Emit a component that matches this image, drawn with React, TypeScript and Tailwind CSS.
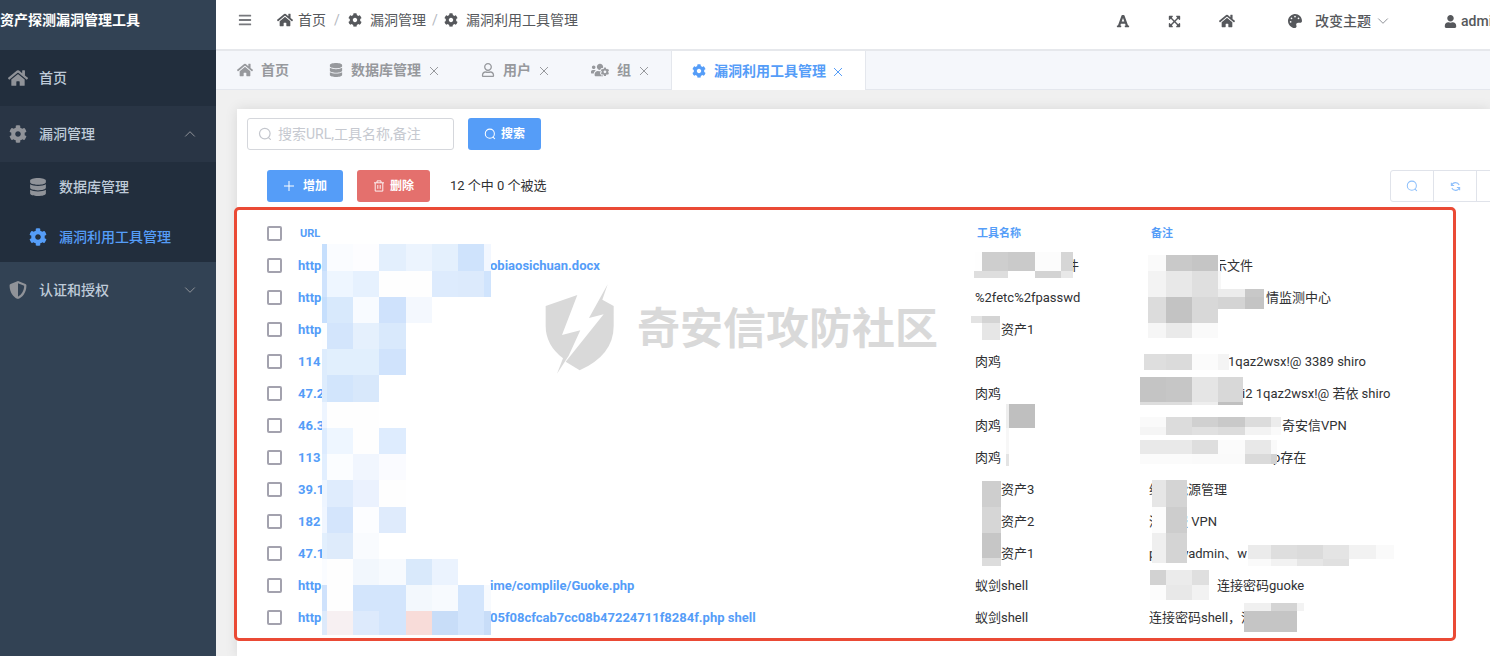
import React from 'react';
import {
  FaBars,
  FaCog,
  FaDatabase,
  FaExpandArrowsAlt,
  FaFont,
  FaHome,
  FaPalette,
  FaRegUser,
  FaShieldAlt,
  FaUser,
  FaUsersCog,
} from 'react-icons/fa';

type IconProps = { className?: string };

function Search({ className }: IconProps) {
  return (
    <svg viewBox="0 0 14 14" fill="none" stroke="currentColor" strokeWidth="1.2" strokeLinecap="round" className={className} aria-hidden="true">
      <circle cx="6.8" cy="6.6" r="5.3" />
      <path d="M10.4 10.6 12.4 12.4" />
    </svg>
  );
}

function Chevron({ className }: IconProps) {
  return (
    <svg viewBox="0 0 12 12" fill="none" stroke="currentColor" strokeWidth="1" strokeLinecap="round" className={className} aria-hidden="true">
      <path d="M1.5 3.8 6 8.3l4.500-4.500" />
    </svg>
  );
}

function Cross({ className }: IconProps) {
  return (
    <svg viewBox="0 0 14 14" fill="none" stroke="currentColor" strokeWidth="1" strokeLinecap="round" className={className} aria-hidden="true">
      <path d="M3.300 4.300l7.400 7.400M10.700 4.300l-7.400 7.400" />
    </svg>
  );
}

function Plus({ className }: IconProps) {
  return (
    <svg viewBox="0 0 12 12" fill="none" stroke="currentColor" strokeWidth="1" className={className} aria-hidden="true">
      <path d="M6 1v10M1 6h10" />
    </svg>
  );
}

function Trash({ className }: IconProps) {
  return (
    <svg viewBox="0 0 12 12" fill="none" stroke="currentColor" strokeWidth="0.9" className={className} aria-hidden="true">
      <path d="M1 2.800h10M4 2.800V.9h4v1.900M2.200 2.800v8.300h7.600V2.800M4.800 5v3.800M7.200 5v3.800" />
    </svg>
  );
}

function Refresh({ className }: IconProps) {
  return (
    <svg viewBox="0 0 12 12" fill="none" stroke="currentColor" strokeWidth="1.2" className={className} aria-hidden="true">
      <path d="M1.800 4.800A4.400 4.400 0 0 1 10 4.300M10.200 7.200A4.400 4.400 0 0 1 2 7.700" />
      <path d="M1.500 1.800v3.100h3M10.500 10.200V7.100h-3" />
    </svg>
  );
}

const rows = [
  { url: 'http', rest: 'obiaosichuan.docx', name: '件', namePad: 'pl-[91px]', note: '示文件', notePad: 'pl-[65px]' },
  { url: 'http', rest: '', name: '%2fetc%2fpasswd', namePad: '', note: '情监测中心', notePad: 'pl-[117px]' },
  { url: 'http', rest: '', name: '资产1', namePad: 'pl-[26px]', note: '', notePad: '' },
  { url: '114', rest: '', name: '肉鸡', namePad: '', note: '1qaz2wsx!@ 3389 shiro', notePad: 'pl-[79px]' },
  { url: '47.2', rest: '', name: '肉鸡', namePad: '', note: 'i2 1qaz2wsx!@ 若依 shiro', notePad: 'pl-[93px]' },
  { url: '46.3', rest: '', name: '肉鸡', namePad: '', note: '奇安信VPN', notePad: 'pl-[133px]' },
  { url: '113', rest: '', name: '肉鸡', namePad: '', note: 'p存在', notePad: 'pl-[124px]' },
  { url: '39.1', rest: '', name: '资产3', namePad: 'pl-[26px]', note: '综合能源管理', notePad: '' },
  { url: '182', rest: '', name: '资产2', namePad: 'pl-[26px]', note: '深信服 VPN', notePad: '' },
  { url: '47.1', rest: '', name: '资产1', namePad: 'pl-[26px]', note: 'phpmyadmin、w', notePad: '' },
  { url: 'http', rest: 'ime/complile/Guoke.php', name: '蚁剑shell', namePad: '', note: '连接密码guoke', notePad: 'pl-[68px]' },
  { url: 'http', rest: '05f08cfcab7cc08b47224711f8284f.php shell', name: '蚁剑shell', namePad: '', note: '连接密码shell，没', notePad: '' },
];

/* Redaction mosaic over the URL column: one colour per tile. */
const gridX = [322, 327, 353, 379, 406, 432, 458, 484, 491];
const gridY = [244, 271, 297, 323, 349, 375, 402, 428, 454, 480, 507, 533, 559, 585, 611, 635];
const grid = [
  '#c6dffd #fafcff #fdfdff #e3effd #ecf4fe #e4f0fd #cfe3fc #f2f7ff',
  '#cfe3fd #eef6ff #e6f1fe #fefefe #fefefe #ddebfd #dceafc #d0e4fd',
  '#c6dffd #d8e9fc #f8fbff #cfe2fc #f4f8fe - - -',
  '#fdfeff #d3e5fc #e5f0fd #d9e9fc - - - -',
  '#ddecfd #e1effd #e1effd #d0e3fc - - - -',
  '#ddecfd #d2e5fc #d8e8fb - - - - -',
  '#eef5ff #fefefe #fefefe - - - - -',
  '#ddecff #eef6ff #fefefe #deecfe - - - -',
  '#e2efff #fbfdff #f1f6fe #fafbff - - - -',
  '#eef5ff #dfecfd #ebf2fe #fefefe - - - -',
  '#f0f6ff #d4e5fc #fcfdff #dfebfc - - - -',
  '#e2effd #deebfb #f9fbfe - - - - -',
  '#fafcff #fefefe #f2f7fd #f7fafe #d9e9fb #ebf3fe - -',
  '#cfe2fc #fefefe #d3e5fc #d3e5fc #f3f8fd #f7fafe #d3e5fc #f7fafe',
  '#ddeafb #f7f0f2 #ddeafc #d3e5fc #f8dcd9 #c8ddf8 #d3e5fc #c8ddf8',
].map((line) => line.split(' '));

/* Grey redaction tiles: x, y, width, height, grey level. */
const tiles: number[][] = [
  [975, 252, 7, 19, 254], [982, 252, 26, 19, 206], [1008, 252, 27, 19, 202], [1035, 252, 26, 19, 252], [1061, 252, 12, 19, 214],
  [974, 271, 34, 7, 222], [1035, 271, 26, 7, 211], [1061, 271, 12, 7, 232],
  [971, 316, 11, 7, 227], [982, 316, 18, 7, 212], [982, 323, 18, 17, 230],
  [1006, 404, 3, 24, 238], [1009, 404, 26, 24, 191], [1006, 428, 3, 26, 247], [1006, 454, 3, 12, 228],
  [982, 481, 19, 26, 206], [982, 507, 19, 26, 214], [982, 533, 19, 25, 198], [982, 558, 19, 8, 220],
  [1148, 255, 18, 16, 250], [1166, 255, 26, 16, 201], [1192, 255, 26, 16, 197], [1218, 255, 2, 16, 253],
  [1148, 271, 18, 26, 243], [1166, 271, 26, 26, 232], [1192, 271, 26, 26, 223], [1218, 271, 3, 18, 247],
  [1148, 297, 18, 26, 220], [1166, 297, 26, 26, 195], [1192, 297, 26, 26, 216],
  [1148, 323, 18, 15, 246], [1166, 323, 26, 15, 234], [1192, 323, 26, 15, 250],
  [1218, 289, 27, 8, 236], [1245, 289, 19, 8, 200], [1218, 297, 27, 12, 212], [1245, 297, 19, 12, 196],
  [1144, 354, 22, 16, 222], [1166, 354, 26, 16, 219], [1192, 354, 26, 16, 251], [1218, 354, 11, 16, 244],
  [1140, 377, 26, 25, 196], [1166, 377, 26, 25, 198], [1192, 377, 26, 25, 229], [1218, 377, 25, 25, 216],
  [1140, 402, 52, 3, 221], [1192, 402, 26, 3, 238], [1218, 402, 25, 3, 192],
  [1140, 417, 26, 10, 250], [1166, 417, 26, 10, 220], [1192, 417, 26, 10, 208], [1218, 417, 27, 10, 201], [1245, 417, 26, 10, 220], [1271, 417, 10, 10, 236],
  [1140, 427, 26, 8, 245], [1166, 427, 26, 8, 220], [1192, 427, 26, 8, 224], [1218, 427, 27, 8, 220], [1245, 427, 26, 8, 243], [1271, 427, 10, 8, 250],
  [1140, 440, 52, 14, 233], [1192, 440, 26, 14, 222], [1218, 440, 27, 14, 251], [1245, 440, 26, 14, 232], [1271, 440, 6, 14, 250],
  [1140, 454, 52, 10, 251], [1192, 454, 53, 10, 250], [1245, 454, 26, 10, 218], [1271, 454, 6, 10, 210],
  [1152, 480, 14, 27, 230], [1166, 480, 21, 27, 212], [1152, 507, 14, 26, 252], [1166, 507, 21, 26, 205], [1152, 533, 14, 30, 239], [1166, 533, 21, 30, 212],
  [1248, 545, 23, 14, 235], [1271, 545, 26, 14, 222], [1297, 545, 26, 14, 219], [1323, 545, 26, 14, 228], [1349, 545, 27, 14, 242], [1376, 545, 18, 14, 250],
  [1248, 559, 23, 7, 250], [1271, 559, 26, 7, 242], [1297, 559, 26, 7, 230], [1323, 559, 26, 7, 224],
  [1150, 570, 16, 15, 210], [1166, 570, 26, 15, 235], [1192, 570, 17, 15, 223],
  [1150, 585, 16, 15, 252], [1166, 585, 26, 15, 232], [1192, 585, 17, 15, 242],
  [1244, 603, 27, 8, 240], [1271, 603, 26, 8, 212], [1297, 603, 7, 8, 243], [1244, 611, 53, 21, 197],
];

function Mosaic() {
  return (
    <svg viewBox="237 209 1219 432" className="pointer-events-none absolute top-0 left-0 h-[432px] w-[1219px]" shapeRendering="crispEdges" aria-hidden="true">
      {grid.map((line, r) =>
        line.map((fill, c) =>
          fill === '-' ? null : (
            <rect key={`${r}-${c}`} x={gridX[c]} y={gridY[r]} width={gridX[c + 1] - gridX[c]} height={gridY[r + 1] - gridY[r]} fill={fill} />
          ),
        ),
      )}
      {tiles.map(([x, y, w, h, g], i) => (
        <rect key={i} x={x} y={y} width={w} height={h} fill={`rgb(${g},${g},${g})`} />
      ))}
    </svg>
  );
}

function Watermark() {
  return (
    <div className="pointer-events-none absolute top-[74px] left-[306px] flex items-center gap-[21px] text-[#d9d9d9]">
      <svg viewBox="40 36 219 276" className="h-[92px] w-[73px]" fill="currentColor" aria-hidden="true">
        <path d="M48 105 143 72 97 192 152 178 117 254 82 308 100 262Q48 222 48 165Z" />
        <path d="M234 40 178 141 222 130 108 272 150 298Q252 252 252 165V105L218 86Z" />
      </svg>
      <span className="text-[43px] leading-[60px] font-bold">奇安信攻防社区</span>
    </div>
  );
}

const checkbox = 'block size-[15px] appearance-none rounded-[2px] border-2 border-[#a3a2ae] bg-white checked:bg-[#559df8]';

const tabs = [
  { label: '数据库管理', icon: FaDatabase, iconSize: 'size-3.5' },
  { label: '用户', icon: FaRegUser, iconSize: 'size-3.5' },
  { label: '组', icon: FaUsersCog, iconSize: 'size-[18px]' },
];

export default function App() {
  return (
    <div className="flex min-h-screen overflow-hidden bg-[#f0f0f0] font-['Roboto','Noto_Sans_CJK_SC',sans-serif] text-sm text-[#303133]">
      <aside className="w-[216px] shrink-0 bg-[#324254] text-[#bfcbd9]">
        <h1 className="flex h-[50px] items-start pt-2.5 font-bold whitespace-nowrap text-white">资产探测漏洞管理工具</h1>
        <nav className="font-medium">
          <a href="#home" className="flex h-14 items-center bg-[#222e3d]">
            <span className="flex w-[39px] pl-2"><FaHome className="size-5 text-[#909399]" /></span>首页
          </a>
          <button type="button" className="flex h-14 w-full items-center bg-[#293545] pr-5">
            <span className="flex w-[39px] pl-[9px]"><FaCog className="size-[18px] text-[#909399]" /></span>漏洞管理
            <Chevron className="ml-auto size-3 rotate-180 text-[#909399]" />
          </button>
          <a href="#database" className="flex h-[50px] items-center bg-[#222e3d]">
            <span className="flex w-[59px] pl-[29px]"><FaDatabase className="size-[18px] text-[#909399]" /></span>数据库管理
          </a>
          <a href="#tools" className="flex h-[50px] items-center bg-[#222e3d] text-[#559df8]">
            <span className="flex w-[59px] pl-[29px]"><FaCog className="size-[18px]" /></span>漏洞利用工具管理
          </a>
          <button type="button" className="flex h-14 w-full items-center pr-5">
            <span className="flex w-[39px] pl-[9px]"><FaShieldAlt className="size-[18px] text-[#909399]" /></span>认证和授权
            <Chevron className="ml-auto size-3 text-[#909399]" />
          </button>
        </nav>
      </aside>

      <main className="flex min-w-0 flex-1 flex-col overflow-hidden">
        <header className="flex h-[51px] items-start justify-between border-b-2 border-[#e6e8ec] bg-white pt-2.5 pl-[22px] text-[#56585c]">
          <div className="flex h-5 items-center">
            <button type="button" aria-label="折叠菜单" className="mr-[25px]"><FaBars className="size-3.5 text-[#77797d]" /></button>
            <nav className="flex items-center">
              <a href="#home" className="flex items-center gap-[5px]"><FaHome className="size-4" />首页</a>
              <span className="w-[22px] text-center text-[#b4b8c0]">/</span>
              <a href="#vuln" className="flex items-center gap-2"><FaCog className="size-3.5" />漏洞管理</a>
              <span className="w-[18px] text-center text-[#b4b8c0]">/</span>
              <a href="#tools" className="flex items-center gap-2"><FaCog className="size-3.5" />漏洞利用工具管理</a>
            </nav>
          </div>
          <div className="-mr-2.5 flex h-[22px] shrink-0 items-center font-medium">
            <button type="button" aria-label="字体大小" className="mr-[38px]"><FaFont className="size-3.5" /></button>
            <button type="button" aria-label="全屏" className="mr-[38px]"><FaExpandArrowsAlt className="size-[13px]" /></button>
            <a href="#home" aria-label="首页" className="mr-[53px]"><FaHome className="size-4" /></a>
            <button type="button" className="mr-[55px] flex items-center">
              <FaPalette className="mr-[13px] size-3.5" />改变主题
              <Chevron className="ml-1.5 size-3 text-[#909399]" />
            </button>
            <button type="button" className="flex items-center gap-1"><FaUser className="size-[13px]" />admin</button>
          </div>
        </header>

        <div className="flex h-[39px] shrink-0 border-b border-[#e4e7ed] bg-[#f5f7fb] pl-px font-bold text-[#97999d]">
          <a href="#home" className="flex items-center gap-2 px-5"><FaHome className="size-4" />首页</a>
          {tabs.map(({ label, icon: Icon, iconSize }) => (
            <div key={label} className="flex items-center px-5">
              <a href={`#${label}`} className="flex items-center gap-2"><Icon className={iconSize} />{label}</a>
              <button type="button" aria-label={`关闭${label}`} className="ml-1.5"><Cross className="size-3.5" /></button>
            </div>
          ))}
          <div className="-mb-px flex items-center border-x border-[#e4e7ed] bg-white px-5 text-[#559df8]">
            <a href="#tools" className="flex items-center gap-2"><FaCog className="size-3.5" />漏洞利用工具管理</a>
            <button type="button" aria-label="关闭漏洞利用工具管理" className="ml-[5px]"><Cross className="size-3.5" /></button>
          </div>
        </div>

        <section className="mt-[19px] ml-[21px] flex-1 bg-white pt-[9px] shadow-[0_0_12px_rgba(0,0,0,0.1)]">
          <form className="flex gap-3.5 pl-2.5" onSubmit={(e) => e.preventDefault()}>
            <label className="flex h-8 w-[207px] items-center gap-1.5 rounded-[3px] border border-[#d5d7dc] pl-2.5 text-[#c3c6cd]">
              <Search className="size-3.5 shrink-0" />
              <input type="text" aria-label="搜索" placeholder="搜索URL,工具名称,备注" className="w-full min-w-0 outline-none placeholder:text-[#c6c9d0]" />
            </label>
            <button type="submit" className="flex h-8 w-[73px] items-center justify-center gap-[5px] rounded-[3px] bg-[#559df8] text-xs font-bold text-white">
              <Search className="size-3" />搜索
            </button>
          </form>

          <div className="mt-5 flex h-8 items-center pl-[30px]">
            <button type="button" className="flex h-8 w-[76px] items-center justify-center gap-2 rounded-[3px] bg-[#559df8] text-xs font-bold text-white">
              <Plus className="size-3" />增加
            </button>
            <button type="button" className="ml-3.5 flex h-8 w-[73px] items-center justify-center gap-[5px] rounded-[3px] bg-[#e4706d] text-xs font-bold text-white">
              <Trash className="size-3" />删除
            </button>
            <span className="ml-5 text-[13px]">12 个中 0 个被选</span>
            <div className="-mr-[30px] ml-auto flex shrink-0 text-[#8fc0fb]">
              <button type="button" aria-label="查找" className="flex h-8 w-11 items-center justify-center rounded-l-[3px] border border-[#e0e3ea]"><Search className="size-3" /></button>
              <button type="button" aria-label="刷新" className="-ml-px flex h-8 w-11 items-center justify-center border border-[#e0e3ea]"><Refresh className="size-[11px]" /></button>
              <button type="button" aria-label="更多" className="-ml-px h-8 w-11 rounded-r-[3px] border border-[#e0e3ea]" />
            </div>
          </div>

          <div className="relative mt-[7px] pt-2 pb-2">
            <table className="ml-[30px] w-[calc(100%-64px)] table-fixed border-collapse text-left text-[13px] whitespace-nowrap">
              <colgroup>
                <col className="w-[31px]" />
                <col className="w-[677px]" />
                <col className="w-[174px]" />
                <col />
              </colgroup>
              <thead>
                <tr className="h-8 text-[11px] text-[#559df8]">
                  <th className="p-0"><input type="checkbox" aria-label="全选" className={checkbox} /></th>
                  <th className="p-0 pt-0.5 pl-0.5">URL</th>
                  <th className="p-0 pt-0.5 pl-0.5">工具名称</th>
                  <th className="p-0 pt-0.5 pl-0.5">备注</th>
                </tr>
              </thead>
              <tbody>
                {rows.map((row, i) => (
                  <tr key={i} className="h-8">
                    <td className="p-0"><input type="checkbox" aria-label={`选择第${i + 1}行`} className={checkbox} /></td>
                    <td className="p-0 pt-0.5">
                      <a href="#detail" className="flex font-bold text-[#559df8]">
                        <span className="w-6">{row.url}</span>
                        <span className="pl-[168px]">{row.rest}</span>
                      </a>
                    </td>
                    <td className="p-0 pt-0.5"><div className={row.namePad}>{row.name}</div></td>
                    <td className="p-0 pt-0.5"><div className={row.notePad}>{row.note}</div></td>
                  </tr>
                ))}
              </tbody>
            </table>
            <Mosaic />
            <Watermark />
            <div className="pointer-events-none absolute -top-0.5 right-[34px] bottom-0 -left-[3px] rounded-[5px] border-[3px] border-[#ea4a35]" />
          </div>
        </section>
      </main>
    </div>
  );
}
